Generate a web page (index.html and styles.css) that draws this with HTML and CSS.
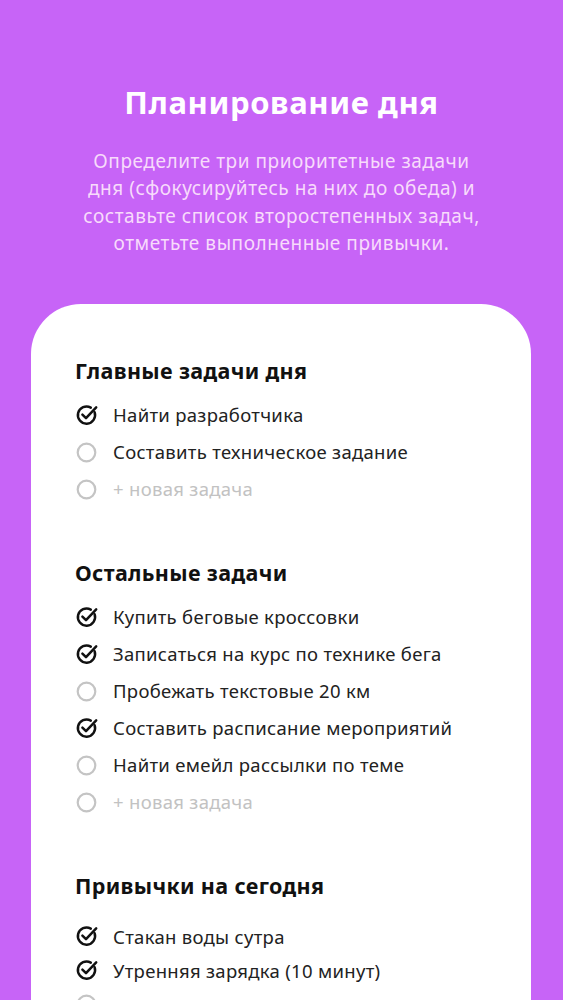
FILE: index.html
```html
<!DOCTYPE html>
<html lang="ru">
<head>
<meta charset="utf-8">
<link rel="stylesheet" href="styles.css">
</head>
<body>
<svg width="0" height="0" class="defs">
  <defs>
    <symbol id="chk" viewBox="0 0 24 24">
      <path d="M19.6 9.2A8.6 8.6 0 1 1 15.8 4.6" fill="none" stroke="#111" stroke-width="2.5" stroke-linecap="round"/>
      <path d="M7.4 11.6l3.6 3.6L21.2 4.4" fill="none" stroke="#111" stroke-width="2.5" stroke-linecap="round" stroke-linejoin="round"/>
    </symbol>
    <symbol id="empty" viewBox="0 0 24 24">
      <circle cx="11.5" cy="12.5" r="8.8" fill="none" stroke="#c4c4c4" stroke-width="2.2"/>
    </symbol>
  </defs>
</svg>
<header class="hero">
  <h1 class="title">Планирование дня</h1>
  <p class="lead">Определите три приоритетные задачи<br>дня (сфокусируйтесь на них до обеда) и<br>составьте список второстепенных задач,<br>отметьте выполненные привычки.</p>
</header>
<main class="card">
  <section class="group">
    <h2 class="group-title">Главные задачи дня</h2>
    <ul class="tasks">
      <li class="task done"><svg class="ico"><use href="#chk"/></svg><span>Найти разработчика</span></li>
      <li class="task"><svg class="ico"><use href="#empty"/></svg><span>Составить техническое задание</span></li>
      <li class="task new"><svg class="ico"><use href="#empty"/></svg><span>+ новая задача</span></li>
    </ul>
  </section>
  <section class="group">
    <h2 class="group-title">Остальные задачи</h2>
    <ul class="tasks">
      <li class="task done"><svg class="ico"><use href="#chk"/></svg><span>Купить беговые кроссовки</span></li>
      <li class="task done"><svg class="ico"><use href="#chk"/></svg><span>Записаться на курс по технике бега</span></li>
      <li class="task"><svg class="ico"><use href="#empty"/></svg><span>Пробежать текстовые 20 км</span></li>
      <li class="task done"><svg class="ico"><use href="#chk"/></svg><span>Составить расписание мероприятий</span></li>
      <li class="task"><svg class="ico"><use href="#empty"/></svg><span>Найти емейл рассылки по теме</span></li>
      <li class="task new"><svg class="ico"><use href="#empty"/></svg><span>+ новая задача</span></li>
    </ul>
  </section>
  <section class="group habits">
    <h2 class="group-title">Привычки на сегодня</h2>
    <ul class="tasks">
      <li class="task done"><svg class="ico"><use href="#chk"/></svg><span>Стакан воды сутра</span></li>
      <li class="task done"><svg class="ico"><use href="#chk"/></svg><span>Утренняя зарядка (10 минут)</span></li>
      <li class="task"><svg class="ico"><use href="#empty"/></svg></li>
    </ul>
  </section>
</main>
</body>
</html>
```

FILE: styles.css
```css
html, body {
  margin: 0;
  padding: 0;
}
body {
  background: #c764f7;
  font-family: "Noto Sans", "Open Sans", sans-serif;
  height: 1000px;
  overflow: hidden;
}
.defs {
  position: absolute;
  width: 0;
  height: 0;
}
.hero {
  padding: 83px 20px 0;
  text-align: center;
}
.title {
  margin: 0;
  color: #fff;
  font-size: 31px;
  line-height: 38px;
  font-weight: 700;
  letter-spacing: 0.6px;
}
.lead {
  margin: 27px 0 0;
  color: rgba(255, 236, 252, 0.88);
  font-size: 19px;
  line-height: 27.3px;
  letter-spacing: 0.55px;
}
.card {
  margin: 47px 32px 0 31px;
  background: #fff;
  border-radius: 50px 50px 0 0;
  padding: 53px 20px 40px 44px;
  min-height: 800px;
}
.group + .group {
  margin-top: 52px;
}
.group-title {
  margin: 0;
  font-size: 21.5px;
  line-height: 28px;
  font-weight: 700;
  color: #111;
  letter-spacing: 0.35px;
}
.tasks {
  list-style: none;
  margin: 11px 0 0;
  padding: 0;
}
.habits .tasks {
  margin-top: 19px;
}
.task {
  display: flex;
  align-items: center;
  height: 37px;
  font-size: 18.5px;
  color: #222;
  letter-spacing: 0.3px;
}
.habits .task {
  height: 34px;
}
.task.new {
  color: #c2c2c2;
}
.ico {
  width: 24px;
  height: 24px;
  margin-right: 14px;
  flex: none;
}
```
